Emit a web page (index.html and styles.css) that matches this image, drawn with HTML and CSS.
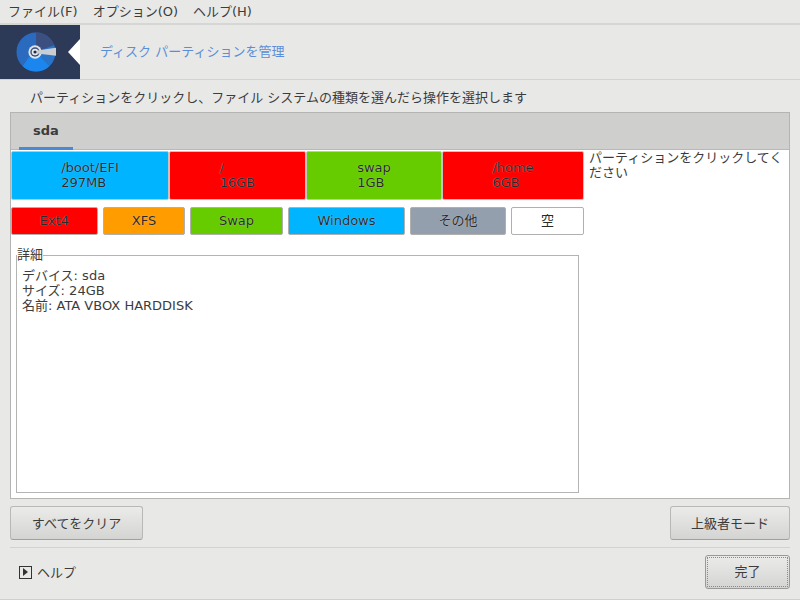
FILE: index.html
```html
<!DOCTYPE html>
<html lang="ja">
<head>
    <meta charset="UTF-8">
    <title>ディスク パーティションを管理</title>
    <link rel="stylesheet" href="styles.css">
</head>
<body>
    <div class="menubar">
        <span>ファイル(F)</span>
        <span>オプション(O)</span>
        <span>ヘルプ(H)</span>
    </div>

    <div class="banner">
        <div class="banner-icon">
            <svg width="40" height="40" viewBox="0 0 42 42">
                <circle cx="21" cy="21" r="20.5" fill="#2a6bbf"/>
                <path d="M21 21 L21 .5 A20.5 20.5 0 0 1 40 14 Z" fill="#3b5080"/>
                <path d="M21 21 L40 14 A20.5 20.5 0 0 1 35 36 Z" fill="#2874c8"/>
                <path d="M21 21 L35 36 A20.5 20.5 0 0 1 7 36 L14 26 Z" fill="#1a86ee"/>
                <circle cx="20" cy="21" r="7" fill="#dfe3ea"/>
                <circle cx="20" cy="21" r="5" fill="#3a5078"/>
                <circle cx="20" cy="21" r="3.5" fill="#e8eaee"/>
                <circle cx="20" cy="21" r="1.7" fill="#1d2c4a"/>
                <path d="M22 19.5 L43 16.5 L43 25 L22 22.5 Z" fill="#c9ced2"/>
            </svg>
            <div class="banner-notch"></div>
        </div>
        <div class="banner-title">ディスク パーティションを管理</div>
    </div>

    <p class="intro">パーティションをクリックし、ファイル システムの種類を選んだら操作を選択します</p>

    <div class="panel">
        <div class="tabs">
            <div class="tab">sda</div>
        </div>
        <div class="panel-body">
            <div class="panel-main">
                <div class="partitions">
                    <div class="part part-efi"><div>/boot/EFI<br>297MB</div></div>
                    <div class="part part-root"><div>/<br>16GB</div></div>
                    <div class="part part-swap"><div>swap<br>1GB</div></div>
                    <div class="part part-home"><div>/home<br>6GB</div></div>
                </div>
                <div class="legend">
                    <div class="fs fs-ext4">Ext4</div>
                    <div class="fs fs-xfs">XFS</div>
                    <div class="fs fs-swap">Swap</div>
                    <div class="fs fs-windows">Windows</div>
                    <div class="fs fs-other">その他</div>
                    <div class="fs fs-empty">空</div>
                </div>
                <fieldset class="details">
                    <legend>詳細</legend>
                    デバイス: sda<br>
                    サイズ: 24GB<br>
                    名前: ATA VBOX HARDDISK
                </fieldset>
            </div>
            <div class="hint">パーティションをクリックしてください</div>
        </div>
    </div>

    <div class="actions">
        <button class="btn btn-clear">すべてをクリア</button>
        <button class="btn btn-expert">上級者モード</button>
    </div>

    <div class="footer">
        <div class="help">
            <span class="help-icon"></span>
            <span>ヘルプ</span>
        </div>
        <button class="btn btn-done"><span>完了</span></button>
    </div>
</body>
</html>
```

FILE: styles.css
```css
html, body {
    height: 100%;
}

body {
    margin: 0;
    height: 600px;
    overflow: hidden;
    box-sizing: border-box;
    background-color: #e8e8e7;
    color: #3c3c3c;
    font-family: "DejaVu Sans", "Noto Sans CJK JP", sans-serif;
    font-size: 13px;
    line-height: 15px;
    border-bottom: 1px solid #cfcfcd;
}

.menubar {
    display: flex;
    gap: 15px;
    height: 23px;
    padding-left: 8px;
    align-items: center;
    border-bottom: 2px solid #d6d6d4;
}

.banner {
    display: flex;
    height: 54px;
    border-bottom: 1px solid #d2d2d0;
}

.banner-icon {
    position: relative;
    width: 80px;
    background-color: #2c3a58;
    display: flex;
    align-items: center;
    padding-left: 16px;
    box-sizing: border-box;
}

.banner-notch {
    position: absolute;
    right: 0;
    top: 14px;
    width: 0;
    height: 0;
    border-top: 13px solid transparent;
    border-bottom: 13px solid transparent;
    border-right: 12px solid #fff;
}

.banner-title {
    padding-left: 20px;
    line-height: 54px;
    color: #5b8ed8;
}

.intro {
    margin: 0;
    padding: 10px 0 0 30px;
    height: 22px;
}

.panel {
    margin: 0 10px;
    height: 387px;
    box-sizing: border-box;
    border: 1px solid #b4b4b2;
    background-color: #fff;
    display: flex;
    flex-direction: column;
}

.tabs {
    height: 36px;
    flex: none;
    background-color: #cfcfcd;
    border-bottom: 1px solid #b8b8b6;
    padding-left: 8px;
}

.tab {
    width: 54px;
    height: 37px;
    box-sizing: border-box;
    padding-top: 10px;
    text-align: center;
    font-weight: bold;
    border-bottom: 3px solid #4a8ad4;
}

.panel-body {
    display: flex;
    flex: 1;
}

.panel-main {
    width: 573px;
    flex: none;
    display: flex;
    flex-direction: column;
}

.partitions {
    display: flex;
    height: 49px;
    margin-top: 1px;
}

.part {
    display: flex;
    align-items: center;
    justify-content: center;
    box-sizing: border-box;
    padding-bottom: 2px;
    border: 1px solid #c4c4c2;
    border-radius: 2px;
    color: #2a2a2a;
    text-shadow: 0 0 1px rgba(255, 255, 255, 0.6);
}

.part-efi {
    width: 158px;
    background-color: #00b4ff;
}

.part-root {
    width: 137px;
    background-color: #ff0000;
}

.part-swap {
    width: 136px;
    background-color: #66cc00;
}

.part-home {
    width: 142px;
    background-color: #ff0000;
}

.legend {
    display: flex;
    justify-content: space-between;
    height: 28px;
    margin-top: 7px;
}

.fs {
    display: flex;
    align-items: center;
    justify-content: center;
    box-sizing: border-box;
    padding-bottom: 2px;
    border: 1px solid #b0b0ae;
    border-radius: 2px;
    color: #2a2a2a;
    text-shadow: 0 0 1px rgba(255, 255, 255, 0.6);
}

.fs-ext4 {
    width: 87px;
    background-color: #ff0000;
}

.fs-xfs {
    width: 82px;
    background-color: #ff9c00;
}

.fs-swap {
    width: 93px;
    background-color: #66cc00;
}

.fs-windows {
    width: 117px;
    background-color: #00b4ff;
}

.fs-other {
    width: 96px;
    background-color: #949fae;
}

.fs-empty {
    width: 73px;
    background-color: #fff;
    text-shadow: none;
}

.details {
    margin: 12px 0 0 5px;
    padding: 4px 5px 0;
    width: 563px;
    height: 246px;
    box-sizing: border-box;
    border: 1px solid #b4b4b2;
    min-width: 0;
}

.details legend {
    padding: 0 0 2px;
    margin-left: -5px;
    line-height: 15px;
}

.hint {
    width: 198px;
    margin-left: 5px;
}

.actions {
    display: flex;
    justify-content: space-between;
    margin: 7px 10px 0;
    height: 41px;
    border-bottom: 1px solid #d2d2d0;
}

.btn {
    font: inherit;
    color: #3c3c3c;
    height: 34px;
    padding: 0;
    box-sizing: border-box;
    border: 1px solid #b8b8b6;
    border-bottom-color: #a0a09e;
    border-radius: 3px;
    background: linear-gradient(#ebebea, #d4d4d2);
}

.btn-clear {
    width: 133px;
}

.btn-expert {
    width: 120px;
}

.footer {
    display: flex;
    justify-content: space-between;
    align-items: center;
    margin: 7px 10px 0;
    height: 34px;
}

.help {
    display: flex;
    align-items: center;
    gap: 5px;
    padding-left: 9px;
}

.help-icon {
    position: relative;
    width: 13px;
    height: 13px;
    box-sizing: border-box;
    border: 1px solid #333;
}

.help-icon::after {
    content: "";
    position: absolute;
    left: 3px;
    top: 1px;
    border-top: 4.5px solid transparent;
    border-bottom: 4.5px solid transparent;
    border-left: 5px solid #333;
}

.btn-done {
    width: 85px;
    padding: 1px;
    border-color: #999;
}

.btn-done span {
    display: block;
    height: 30px;
    line-height: 28px;
    box-sizing: border-box;
    border: 1px dotted #8a8a88;
}
```
